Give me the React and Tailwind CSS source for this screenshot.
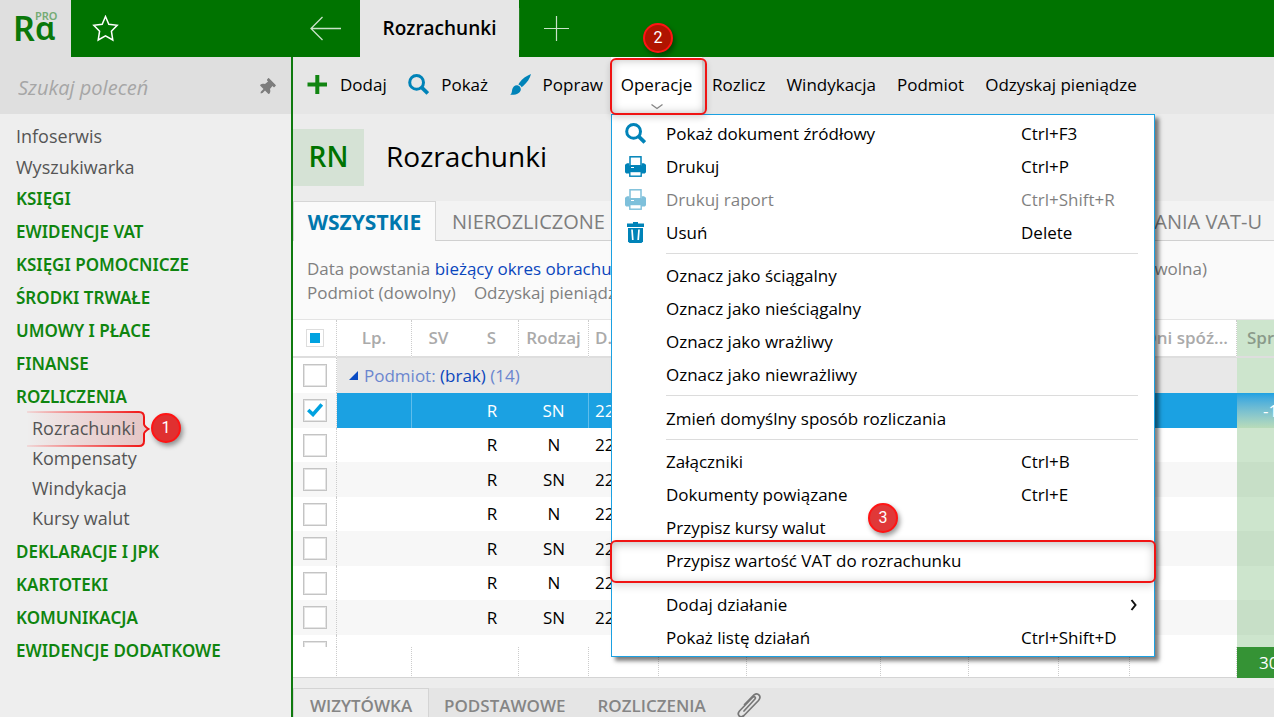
import React, { useState } from 'react';
import { FaThumbtack } from 'react-icons/fa';

const SearchIcon = () => (
  <svg width="21" height="21" viewBox="0 0 21 21" fill="none" stroke="#0083b8" className="shrink-0">
    <circle cx="8.6" cy="8.4" r="6.9" strokeWidth="3" />
    <path d="M13.6 13.4 L19.8 19.4" strokeWidth="3.8" />
  </svg>
);

const PlusIcon = () => (
  <svg width="21" height="21" viewBox="0 0 21 21" className="shrink-0">
    <path d="M8.3 1h4v7.600H20v4h-7.700V20h-4v-7.400H.5v-4h7.800z" fill="#128512" />
  </svg>
);

const BrushIcon = () => (
  <svg width="21" height="21" viewBox="0 0 21 21" fill="#0083b8" className="shrink-0">
    <path d="M21 0 C17 1.500 12.500 4.500 9.200 8.900 L8.400 10.500 C9.900 11 11 12 11.600 13.200 L13.200 12 C17 8.500 20 4.500 21 0z" />
    <path d="M7.400 11.300 C9.300 11.800 10.600 13.200 10.800 15 C11 19 6 21.400 0.200 20.700 C2 19.800 1.700 18 2.200 15.600 C2.700 13 4.800 11 7.400 11.300z" />
  </svg>
);

const PrinterIcon = () => (
  <svg width="21" height="21" viewBox="0 0 21 21" className="shrink-0">
    <rect x="5" y="0.8" width="11" height="9" fill="#fff" stroke="#0083b8" strokeWidth="1.500" />
    <path d="M2 7.200h2.300v2.300h12.400V7.200H19l2 1.600v7.400l-1.200 1.300H1.200L0 16.200V8.800z" fill="#0083b8" />
    <rect x="6" y="11" width="3" height="1" fill="#fff" />
    <rect x="4.800" y="15.500" width="11.400" height="4.700" fill="#fff" stroke="#0083b8" strokeWidth="1.400" />
  </svg>
);

const TrashIcon = () => (
  <svg width="21" height="21" viewBox="0 0 21 21" className="shrink-0">
    <path d="M8 0h5v1.500h6v3.500H2V1.500h6z" fill="#0083b8" />
    <path d="M3 6h15v13.500L16.500 21h-12L3 19.500z" fill="#0083b8" />
    <path d="M7 7.500l.8 10.500M14 7.500l-.8 10.500" stroke="#fff" strokeWidth="1.700" />
  </svg>
);

const ICONS = { search: SearchIcon, plus: PlusIcon, brush: BrushIcon, printer: PrinterIcon, trash: TrashIcon };

const MENU = [
  [
    { label: 'Pokaż dokument źródłowy', keys: 'Ctrl+F3', icon: 'search' },
    { label: 'Drukuj', keys: 'Ctrl+P', icon: 'printer' },
    { label: 'Drukuj raport', keys: 'Ctrl+Shift+R', icon: 'printer', disabled: true },
    { label: 'Usuń', keys: 'Delete', icon: 'trash' },
  ],
  [
    { label: 'Oznacz jako ściągalny' },
    { label: 'Oznacz jako nieściągalny' },
    { label: 'Oznacz jako wrażliwy' },
    { label: 'Oznacz jako niewrażliwy' },
  ],
  [{ label: 'Zmień domyślny sposób rozliczania' }],
  [
    { label: 'Załączniki', keys: 'Ctrl+B' },
    { label: 'Dokumenty powiązane', keys: 'Ctrl+E' },
    { label: 'Przypisz kursy walut', step: 3 },
    { label: 'Przypisz wartość VAT do rozrachunku', framed: true },
  ],
  [
    { label: 'Dodaj działanie', submenu: true },
    { label: 'Pokaż listę działań', keys: 'Ctrl+Shift+D' },
  ],
];

const SECTIONS_TOP = ['KSIĘGI', 'EWIDENCJE VAT', 'KSIĘGI POMOCNICZE', 'ŚRODKI TRWAŁE', 'UMOWY I PŁACE', 'FINANSE', 'ROZLICZENIA'];
const SECTIONS_BOTTOM = ['DEKLARACJE I JPK', 'KARTOTEKI', 'KOMUNIKACJA', 'EWIDENCJE DODATKOWE'];
const SUB_ITEMS = ['Rozrachunki', 'Kompensaty', 'Windykacja', 'Kursy walut'];

const ROWS = [
  { kind: 'SN', date: '22', amount: '-1' },
  { kind: 'N', date: '22', amount: '' },
  { kind: 'SN', date: '22', amount: '' },
  { kind: 'N', date: '22', amount: '' },
  { kind: 'SN', date: '22', amount: '' },
  { kind: 'N', date: '22', amount: '' },
  { kind: 'SN', date: '22', amount: '' },
];

const DOTTED = 'border-r border-r-[#cccccc] [border-right-style:dotted]';

const StepBadge = ({ n, className }) => (
  <span
    className={`absolute z-30 flex size-[30px] items-center justify-center rounded-full border-2 border-[#ff1414] font-[Roboto,sans-serif] text-base text-white shadow-[2px_3px_5px_rgba(0,0,0,0.4)] ${className}`}
  >
    {n}
  </span>
);

const SideSection = ({ label }) => (
  <a href="#" className="flex h-[33px] items-center pl-4 font-['Noto_Sans',sans-serif] text-[17px] font-semibold text-[#0f850f]">
    {label}
  </a>
);

const Sidebar = () => (
  <aside className="flex w-[293px] shrink-0 flex-col border-r-2 border-[#0f7a0f] bg-[#eeeeee]">
    <div className="flex h-[57px] shrink-0 items-center bg-[#dfdfdf] pt-1 pr-4 pl-[18px]">
      <input
        type="text"
        aria-label="Szukaj poleceń"
        placeholder="Szukaj poleceń"
        className="min-w-0 flex-1 bg-transparent text-xl italic outline-none placeholder:text-[#a6a6a6]"
      />
      <button type="button" aria-label="Przypnij">
        <FaThumbtack className="rotate-45 text-[#7d7d7d]" size={17} />
      </button>
    </div>
    <nav className="flex flex-col pt-1.5 whitespace-nowrap">
      <a href="#" className="flex h-[31px] items-center pl-4 text-lg text-[#555555]">Infoserwis</a>
      <a href="#" className="flex h-[31px] items-center pl-4 text-lg text-[#555555]">Wyszukiwarka</a>
      {SECTIONS_TOP.map((label) => <SideSection key={label} label={label} />)}
      <div className="relative mb-0.5">
        <svg width="124" height="38" viewBox="0 0 124 38" fill="none" className="absolute top-[-3px] left-[27px]">
          <defs>
            <linearGradient id="braceFill" x1="0" x2="1" y1="0" y2="0">
              <stop offset="0" stopColor="#e33" stopOpacity="0" />
              <stop offset="1" stopColor="#c66" stopOpacity="0.3" />
            </linearGradient>
            <linearGradient id="braceLine" gradientUnits="userSpaceOnUse" x1="0" x2="118" y1="0" y2="0">
              <stop offset="0" stopColor="#f22" stopOpacity="0.1" />
              <stop offset="1" stopColor="#f01414" />
            </linearGradient>
          </defs>
          <path
            d="M0 2 H112 Q117 2 117 7 V14 Q117 16 121.500 19 Q117 22 117 24 V31 Q117 36 112 36 H0"
            fill="url(#braceFill)"
            stroke="url(#braceLine)"
            strokeWidth="2"
          />
        </svg>
        <StepBadge n={1} className="top-0 left-[151px] bg-[#e03030]" />
        {SUB_ITEMS.map((label) => (
          <a key={label} href="#" className="relative flex h-[30px] items-center pl-8 text-lg text-[#555555]">
            {label}
          </a>
        ))}
      </div>
      {SECTIONS_BOTTOM.map((label) => <SideSection key={label} label={label} />)}
    </nav>
  </aside>
);

const MenuItem = ({ item }) => {
  const Icon = item.icon ? ICONS[item.icon] : null;
  return (
    <li className="relative">
      <button
        type="button"
        disabled={item.disabled}
        className={`flex h-[33px] w-full items-center pr-4 pl-[13px] text-left text-[17px] text-black ${item.disabled ? 'opacity-50' : ''}`}
      >
        <span className="w-[41px]">{Icon && <Icon />}</span>
        <span className="flex-1">{item.label}</span>
        {item.keys && <span className="w-[117px]">{item.keys}</span>}
        {item.submenu && (
          <svg width="8" height="12" viewBox="0 0 8 12" fill="none" stroke="#111" strokeWidth="2">
            <path d="M1.500 1 L5.500 6 L1.500 11" />
          </svg>
        )}
      </button>
      {item.framed && (
        <span className="pointer-events-none absolute -inset-x-0.5 -top-1 -bottom-1.5 rounded-md border-2 border-[#f01414] shadow-[0_3px_8px_rgba(0,0,0,0.15),inset_0_2px_10px_rgba(0,0,0,0.25)]" />
      )}
      {item.step && <StepBadge n={item.step} className="-top-2 left-64 bg-[#e03838]" />}
    </li>
  );
};

const OperationsMenu = () => (
  <div className="absolute top-full left-0 z-20 w-[544px] border border-[#1ba1e2] bg-white pt-0.5 pb-0.5 shadow-[4px_4px_4px_rgba(0,0,0,0.5)]">
    {MENU.map((group, i) => (
      <React.Fragment key={i}>
        {i > 0 && <hr className={`mt-1 mr-4 ml-[54px] border-[#dcdcdc] ${i % 2 ? 'mb-[5px]' : 'mb-1.5'}`} />}
        <ul>
          {group.map((item) => <MenuItem key={item.label} item={item} />)}
        </ul>
      </React.Fragment>
    ))}
  </div>
);

const ToolButton = ({ icon, label }) => {
  const Icon = icon ? ICONS[icon] : null;
  return (
    <button type="button" className="flex items-center gap-3 whitespace-nowrap">
      {Icon && <Icon />}
      {label}
    </button>
  );
};

const Toolbar = ({ open, onToggle }) => (
  <div className="flex h-[57px] shrink-0 items-center bg-[#e6e6e6] text-[17px] text-black">
    <div className="flex w-[318px] shrink-0 items-center justify-between pr-2 pb-0.5 pl-3.5">
      <ToolButton icon="plus" label="Dodaj" />
      <ToolButton icon="search" label="Pokaż" />
      <ToolButton icon="brush" label="Popraw" />
    </div>
    <div className="relative h-full">
      <button type="button" onClick={onToggle} className="flex h-full w-[91px] items-center justify-center bg-white pb-0.5">
        Operacje
      </button>
      <svg width="12" height="6" viewBox="0 0 12 6" fill="none" stroke="#888" strokeWidth="1.300" className="absolute bottom-1 left-10">
        <path d="M0.500 0.500 L6 4.500 L11.500 0.500" />
      </svg>
      <span className="pointer-events-none absolute top-px -right-[5px] -bottom-px -left-px z-30 rounded-md border-2 border-[#f01414] shadow-[0_3px_6px_rgba(0,0,0,0.15),inset_0_0_10px_rgba(0,0,0,0.25)]" />
      <StepBadge n={2} className="-top-[34px] left-8 bg-[#b01400]" />
      {open && <OperationsMenu />}
    </div>
    <div className="flex gap-[21px] pb-0.5 pl-2.5">
      <ToolButton label="Rozlicz" />
      <ToolButton label="Windykacja" />
      <ToolButton label="Podmiot" />
      <ToolButton label="Odzyskaj pieniądze" />
    </div>
  </div>
);

const RowCheck = ({ checked, label }) => (
  <label className="relative mx-auto block h-[23px] w-6">
    <input
      type="checkbox"
      aria-label={label}
      defaultChecked={checked}
      className="peer block h-[23px] w-6 appearance-none border border-[#c4c4c4] bg-white shadow-[inset_0_0_0_1px_#e4e4e4]"
    />
    <svg width="16" height="14" viewBox="0 0 16 14" fill="none" stroke="#00a2e0" strokeWidth="3.600" className="absolute top-1 left-1 hidden peer-checked:block">
      <path d="M1.200 7 L6 11.500 L14.800 1.500" />
    </svg>
  </label>
);

const SettlementsTable = () => (
  <table className="w-full table-fixed border-separate border-spacing-0 bg-white text-[17px]">
    <colgroup>
      <col className="w-11" />
      <col className="w-[75px]" />
      <col className="w-[53px]" />
      <col className="w-[54px]" />
      <col className="w-[70px]" />
      <col className="w-[70px]" />
      <col className="w-[88px]" />
      <col className="w-[134px]" />
      <col className="w-[88px]" />
      <col className="w-[90px]" />
      <col className="w-[71px]" />
      <col className="w-[107px]" />
      <col />
    </colgroup>
    <thead>
      <tr className="h-[38px] text-[#aaaaaa] *:overflow-hidden *:border-b-2 *:border-b-[#dedede] *:p-0 *:font-semibold *:whitespace-nowrap">
        <th className={DOTTED}>
          <label className="relative mx-auto block size-[18px]">
            <input type="checkbox" aria-label="Zaznacz wszystkie" className="block size-[18px] appearance-none border border-[#dddddd] bg-white" />
            <span className="absolute top-1 left-1 size-2.5 bg-[#00a2e0]" />
          </label>
        </th>
        <th className={DOTTED}>Lp.</th>
        <th>SV</th>
        <th className={DOTTED}>S</th>
        <th className={DOTTED}>Rodzaj</th>
        <th className={DOTTED}><div className="pl-1.5 text-left">D...</div></th>
        <th className={DOTTED} />
        <th className={DOTTED} />
        <th className={DOTTED} />
        <th className={DOTTED} />
        <th className={DOTTED} />
        <th className={DOTTED}><div className="pr-2 text-right">Dni spóź...</div></th>
        <th className="bg-[#cde5cd] text-[#8a9a8a]"><div className="pl-2.5 text-left">Spr</div></th>
      </tr>
    </thead>
    <tbody>
      <tr className="h-[35px] *:p-0">
        <td className={DOTTED}><RowCheck label="Zaznacz grupę" /></td>
        <td colSpan={11} className="bg-[#e8e8e8]">
          <div className="flex items-center gap-1.5 pl-3 text-[#6b86cf]">
            <svg width="9" height="9" viewBox="0 0 9 9"><path d="M9 0v9H0z" fill="#0a4bc4" /></svg>
            <span>Podmiot: <span className="text-[#0a46bd]">(brak)</span> (14)</span>
          </div>
        </td>
        <td className="bg-[#cde5cd]" />
      </tr>
      {ROWS.map((row, i) => {
        const selected = i === 0;
        const cell = selected ? 'bg-[#1ba1e2] text-white' : i % 2 ? 'bg-white' : 'bg-[#f7f7f7]';
        const line = selected ? 'border-r border-[#5fbdeb]' : '';
        return (
          <tr key={i} className={`${i % 2 ? 'h-[34px]' : 'h-[35px]'} text-center text-black *:overflow-hidden *:p-0`}>
            <td className={`${DOTTED} ${i % 2 ? 'bg-white' : 'bg-[#f7f7f7]'}`}>
              <RowCheck checked={selected} label={`Zaznacz wiersz ${i + 1}`} />
            </td>
            <td className={`${cell} ${line}`} />
            <td className={cell} />
            <td className={cell}>R</td>
            <td className={`${cell} ${line}`}>{row.kind}</td>
            <td className={cell}><div className="pl-1.5 text-left">{row.date}</div></td>
            <td colSpan={6} className={cell} />
            <td className={selected ? 'bg-linear-to-b from-[#1ba1e2] to-[#b9dcb9] text-white' : i % 2 ? 'bg-[#cde5cd]' : 'bg-[#c7dfc7]'}>
              <div className="pl-[26px] text-left whitespace-nowrap">{row.amount}</div>
            </td>
          </tr>
        );
      })}
      <tr className="*:p-0">
        <td className={DOTTED}>
          <div className="h-3 overflow-hidden pt-1.5"><RowCheck label="Zaznacz wiersz 8" /></div>
        </td>
        <td colSpan={11} />
        <td className="bg-[#cde5cd]" />
      </tr>
    </tbody>
    <tfoot>
      <tr className="h-[31px] *:overflow-hidden *:p-0">
        <td className={`${DOTTED} border-b border-b-[#d4d4d4]`} />
        <td className={`${DOTTED} border-b border-b-[#d4d4d4]`} />
        <td className="border-b border-b-[#d4d4d4]" />
        <td className={`${DOTTED} border-b border-b-[#d4d4d4]`} />
        <td className={`${DOTTED} border-b border-b-[#d4d4d4]`} />
        <td className={`${DOTTED} border-b border-b-[#d4d4d4]`} />
        <td className={`${DOTTED} border-b border-b-[#d4d4d4]`} />
        <td className={`${DOTTED} border-b border-b-[#d4d4d4]`} />
        <td className={`${DOTTED} border-b border-b-[#d4d4d4]`} />
        <td className={`${DOTTED} border-b border-b-[#d4d4d4]`} />
        <td className={`${DOTTED} border-b border-b-[#d4d4d4]`} />
        <td className={`${DOTTED} border-b border-b-[#d4d4d4]`} />
        <td className="bg-[#359335] text-white"><div className="pl-[22px]">30</div></td>
      </tr>
    </tfoot>
  </table>
);

const App = () => {
  const [menuOpen, setMenuOpen] = useState(true);

  return (
    <div className="flex h-screen flex-col overflow-hidden bg-[#ededed] font-['Open_Sans','Noto_Sans',sans-serif]">
      <header className="flex h-[57px] shrink-0 bg-[#007300]">
        <div className="flex w-[71px] shrink-0 items-start bg-[#dfdfdf] pt-2.5 pl-[13px] font-['Noto_Sans',sans-serif] text-[#0a780a]">
          <span className="text-[34px] leading-9 font-semibold">R</span>
          <span className="flex flex-col">
            <span className="text-[11px] leading-3 font-semibold text-[#74ab74]">PRO</span>
            <span className="-mt-1.5 text-[32px] leading-6 font-semibold">ɑ</span>
          </span>
        </div>
        <div className="flex flex-1 items-center">
          <button type="button" aria-label="Ulubione" className="ml-[21px]">
            <svg width="27" height="27" viewBox="0 0 27 27" fill="none" stroke="#fff" strokeWidth="1.500">
              <path d="M13.500 1.500 L16.800 9.200 L25.200 10.200 L19.400 16.200 L20.800 25 L13.500 20.900 L6.200 25 L7.600 16.200 L1.800 10.200 L10.200 9.200 Z" />
            </svg>
          </button>
          <button type="button" aria-label="Wstecz" className="ml-[191px]">
            <svg width="31" height="25" viewBox="0 0 31 25" fill="none" stroke="#c9e2c9" strokeWidth="1.300">
              <path d="M31 12.500 H1 M12.500 1 L1 12.500 L12.500 24" />
            </svg>
          </button>
          <button type="button" className="ml-[19px] h-full w-[159px] bg-[#e6e6e6] text-[19px] font-semibold text-black">
            Rozrachunki
          </button>
          <button type="button" aria-label="Nowa karta" className="flex h-[42px] w-[74px] items-center justify-center border-l border-[#228022]">
            <svg width="25" height="25" viewBox="0 0 25 25" fill="none" stroke="#c9e2c9" strokeWidth="1.200">
              <path d="M12.500 0 V25 M0 12.500 H25" />
            </svg>
          </button>
        </div>
      </header>
      <div className="flex min-h-0 flex-1">
        <Sidebar />
        <main className="flex min-w-0 flex-1 flex-col">
          <Toolbar open={menuOpen} onToggle={() => setMenuOpen(!menuOpen)} />
          <div className="flex h-[87px] shrink-0 items-center gap-[22px] bg-[#ececec]">
            <div className="flex h-[57px] w-[71px] items-center justify-center bg-[#d5e2d5] pb-1 text-[28px] font-semibold text-[#007300]">RN</div>
            <h1 className="pb-1 text-[28px] text-black">Rozrachunki</h1>
          </div>
          <div className="flex h-10 shrink-0 text-xl text-[#7d7d7d]">
            <button type="button" className="w-[143px] border border-b-0 border-[#d6d6d6] bg-[#fafafa] pt-0.5 text-[21px] font-bold text-[#0077ad]">WSZYSTKIE</button>
            <div className="flex flex-1 items-center justify-between border-b border-[#d0d0d0] bg-[#f3f3f3] pt-0.5 pr-3 pl-4 whitespace-nowrap">
              <button type="button">NIEROZLICZONE</button>
              <button type="button">ANIA VAT-U</button>
            </div>
          </div>
          <div className="h-[79px] shrink-0 border-b border-[#e4e4e4] bg-[#fafafa] px-3.5 pt-4 text-[17px] leading-6 text-[#808080]">
            <div className="flex justify-between pr-[53px]">
              <span>Data powstania <a href="#" className="text-[#0a46bd]">bieżący okres obrachunkowy</a></span>
              <span>(dowolna)</span>
            </div>
            <div className="flex gap-[18px]">
              <span>Podmiot (dowolny)</span>
              <span>Odzyskaj pieniądze</span>
            </div>
          </div>
          <SettlementsTable />
          <div className="mt-2.5 flex flex-1 bg-[#e5e5e5] text-[17px] font-semibold text-[#858585]">
            <button type="button" className="h-9 w-[136px] border border-[#d4d4d4] bg-[#ededed]">WIZYTÓWKA</button>
            <button type="button" className="ml-[15px] h-9">PODSTAWOWE</button>
            <button type="button" className="ml-8 h-9">ROZLICZENIA</button>
            <button type="button" aria-label="Załączniki" className="ml-[30px] h-9">
              <svg width="26" height="28" viewBox="0 0 26 28" fill="none" stroke="#777" strokeWidth="1.700" strokeLinecap="round">
                <path d="M8 19 L18.500 7.500 C20.500 5.500 18.500 3.500 16.500 5.500 L3.500 19 C0.500 22.500 4 27 8 23.500 L22.500 8.500 C26 4.500 22 0 18 3 L8.500 12.500" />
              </svg>
            </button>
          </div>
        </main>
      </div>
    </div>
  );
};

export default App;
